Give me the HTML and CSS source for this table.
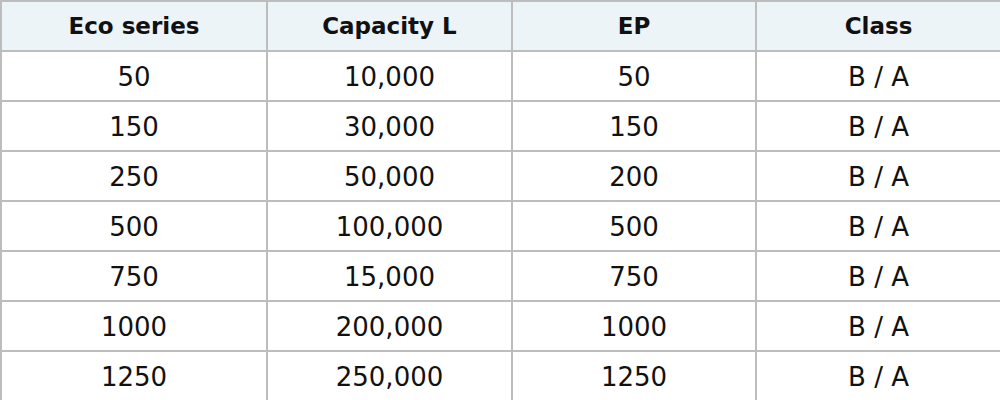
FILE: index.html
```html
<!DOCTYPE html>
<html>
<head>
<meta charset="utf-8">
<link rel="stylesheet" href="styles.css">
</head>
<body>
<table class="spec">
  <colgroup>
    <col class="c1"><col class="c2"><col class="c3"><col class="c4">
  </colgroup>
  <thead>
    <tr><th>Eco series</th><th>Capacity L</th><th>EP</th><th>Class</th></tr>
  </thead>
  <tbody>
    <tr><td>50</td><td>10,000</td><td>50</td><td>B / A</td></tr>
    <tr><td>150</td><td>30,000</td><td>150</td><td>B / A</td></tr>
    <tr><td>250</td><td>50,000</td><td>200</td><td>B / A</td></tr>
    <tr><td>500</td><td>100,000</td><td>500</td><td>B / A</td></tr>
    <tr><td>750</td><td>15,000</td><td>750</td><td>B / A</td></tr>
    <tr><td>1000</td><td>200,000</td><td>1000</td><td>B / A</td></tr>
    <tr><td>1250</td><td>250,000</td><td>1250</td><td>B / A</td></tr>
  </tbody>
</table>
</body>
</html>
```
FILE: styles.css
```css
html, body {
  margin: 0;
  padding: 0;
  background: #ffffff;
}
.spec {
  width: 1000px;
  height: 400px;
  border-collapse: collapse;
  table-layout: fixed;
  font-family: "DejaVu Sans", sans-serif;
  color: #111111;
}
.c1 { width: 266px; }
.c2 { width: 245px; }
.c3 { width: 244px; }
.c4 { width: 245px; }
.spec th, .spec td {
  border: 2px solid #bdbdbd;
  height: 48px;
  padding: 0;
  text-align: center;
  vertical-align: middle;
}
.spec th {
  background: #edf4f8;
  font-weight: bold;
  font-size: 23px;
}
.spec td {
  height: 46px;
  padding-top: 2px;
  font-size: 26px;
  font-weight: normal;
}
```
